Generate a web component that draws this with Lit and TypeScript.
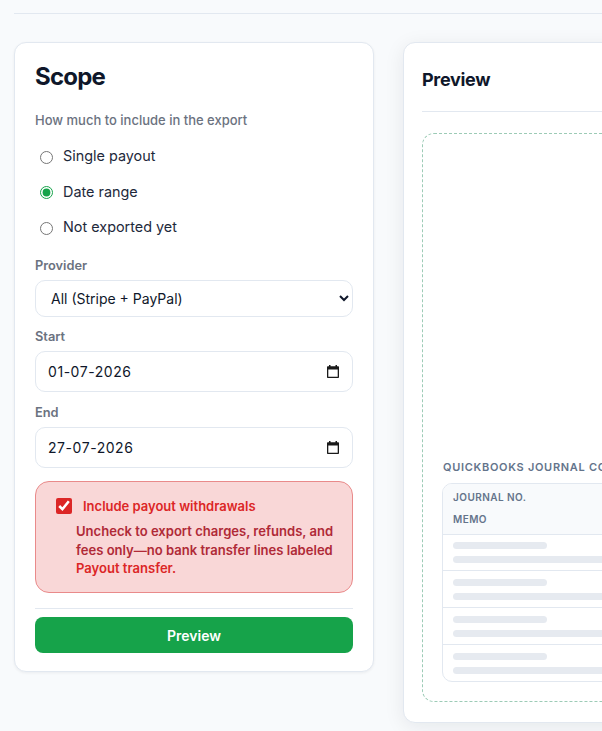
import { LitElement, html, css } from "lit";
import { customElement } from "lit/decorators.js";

const calendar = html`<svg class="cal" viewBox="0 0 12 13" width="12" height="13" aria-hidden="true">
  <path fill="#1a1a1a" d="M2 0h1.5v1.2h5V0H10v1.2h1c.6 0 1 .4 1 1V12c0 .6-.4 1-1 1H1c-.6 0-1-.4-1-1V2.2c0-.6.4-1 1-1h1V0zM1.3 4.4v7.3h9.4V4.4H1.3z" />
</svg>`;

@customElement("app-root")
export class AppRoot extends LitElement {
  static styles = css`
    :host { display: block; width: 602px; height: 731px; overflow: hidden; background: #f8fafc; font-family: Inter, "Liberation Sans", sans-serif; color: #0f172a; }
    * { box-sizing: border-box; }
    .page { width: 1300px; padding: 13px 0 0 14px; }
    .rule { height: 1px; background: #e2e8f0; margin-bottom: 28px; }
    .cols { display: grid; grid-template-columns: 360px 880px; column-gap: 29px; align-items: start; }
    .card { background: #fff; border: 1px solid #e2e8f0; border-radius: 12px; box-shadow: 0 1px 3px rgba(15,23,42,.06); }
    .scope { padding: 19px 20px 20px; height: 630px; display: flex; flex-direction: column; }
    .scope > * { flex: none; }
    h2 { margin: 0; font-size: 24px; line-height: 29px; font-weight: 700; letter-spacing: -.8px; }
    .hint { margin: 21px 0 0; font-size: 13px; line-height: 16px; color: #6b7280; font-weight: 500; }
    .radios { display: flex; flex-direction: column; margin-top: 10px; }
    .radio { display: flex; align-items: center; height: 35.5px; flex: none; font-size: 14.4px; color: #1e293b; }
    .radio input { margin: 3px 10px 0 5px; width: 13px; height: 13px; accent-color: #16a34a; }
    .lab { display: block; font-size: 12.8px; line-height: 15px; font-weight: 600; color: #6b7280; margin-top: 13px; }
    .lab.first { margin-top: 13.5px; }
    .lab.tight { margin-top: 12px; }
    .ctl { display: block; width: 318px; margin-top: 7px; border: 1px solid #e2e8f0; border-radius: 10px; background: #fff; font: 14px Inter, sans-serif; color: #0f172a; }
    select.ctl { height: 37px; padding: 0 8px 0 11px; }
    .date { display: flex; align-items: center; height: 41px; padding: 0 13px 0 12px; }
    .date input { flex: 1; min-width: 0; border: 0; padding: 0; background: none; outline: none; font: inherit; color: inherit; letter-spacing: .55px; }
    .cal { flex: none; display: block; }
    .alert { margin-top: 13px; height: 111.5px; background: #f9d7d7; border: 1px solid #e98a8a; border-radius: 14px; padding: 15px 18px 0 20px; }
    .chk { display: flex; align-items: center; font-size: 13px; line-height: 18px; font-weight: 600; color: #dc2626; }
    .chk input { margin: 0 11px 0 0; width: 16px; height: 16px; accent-color: #dc2626; }
    .desc { margin: 7px -8px 0 20px; font-size: 13.05px; line-height: 18.5px; font-weight: 600; color: #b02a37; }
    .desc b { font-weight: 600; color: #dc2626; }
    .sep { height: 1px; background: #e2e8f0; margin-top: 15.5px; }
    button { margin-top: 8px; height: 36px; width: 318px; border: 0; border-radius: 8px; background: #16a34a; color: #fff; font: 600 14px Inter, sans-serif; }
    .preview { height: 681px; padding: 18px 18px 20px 18px; box-shadow: 0 4px 20px rgba(15,23,42,.08); }
    .preview h2 { font-size: 18px; line-height: 38px; letter-spacing: -.3px; }
    .head { height: 51px; border-bottom: 1px solid #e2e8f0; }
    .drop { margin-top: 21px; height: 569px; border: 1px dashed #9ccbb6; border-radius: 12px; padding: 0 19px 19px; display: flex; flex-direction: column; justify-content: flex-end; }
    .cap { font-size: 11px; line-height: 14px; font-weight: 600; letter-spacing: .7px; color: #64748b; margin: 0 0 9px 1px; white-space: nowrap; }
    .table { border: 1px solid #e2e8f0; border-radius: 10px; overflow: hidden; }
    .thead { height: 51px; padding: 6px 10px 0; background: #f8fafc; border-bottom: 1px solid #e2e8f0; font-size: 10px; font-weight: 600; letter-spacing: .45px; color: #64748b; display: flex; flex-direction: column; gap: 7px; line-height: 15px; }
    .row { height: 37px; padding: 8px 10px 0; border-bottom: 1px solid #e2e8f0; display: flex; flex-direction: column; gap: 7px; }
    .row:nth-child(2) { height: 36px; padding-top: 7px; }
    .row:last-child { height: 36px; border-bottom: 0; }
    .sk { height: 7px; border-radius: 4px; background: #e6eaf0; flex: none; }
    .sk.s { width: 94px; }
  `;

  render() {
    return html`
      <div class="page">
        <div class="rule"></div>
        <div class="cols">
          <section class="card scope">
            <h2>Scope</h2>
            <p class="hint">How much to include in the export</p>
            <div class="radios">
              <label class="radio"><input type="radio" name="r" />Single payout</label>
              <label class="radio"><input type="radio" name="r" checked />Date range</label>
              <label class="radio"><input type="radio" name="r" />Not exported yet</label>
            </div>
            <label class="lab first">Provider</label>
            <select class="ctl"><option>All (Stripe + PayPal)</option></select>
            <label class="lab tight">Start</label>
            <div class="ctl date"><input type="text" value="01-07-2026" />${calendar}</div>
            <label class="lab">End</label>
            <div class="ctl date"><input type="text" value="27-07-2026" />${calendar}</div>
            <div class="alert">
              <label class="chk"><input type="checkbox" checked />Include payout withdrawals</label>
              <p class="desc">Uncheck to export charges, refunds, and fees only—no bank transfer lines labeled <b>Payout transfer.</b></p>
            </div>
            <div class="sep"></div>
            <button>Preview</button>
          </section>
          <section class="card preview">
            <div class="head"><h2>Preview</h2></div>
            <div class="drop">
              <div class="cap">QUICKBOOKS JOURNAL CONTENTS</div>
              <div class="table">
                <div class="thead"><span>JOURNAL NO.</span><span>MEMO</span></div>
                ${[0, 1, 2, 3].map(() => html`<div class="row"><div class="sk s"></div><div class="sk"></div></div>`)}
              </div>
            </div>
          </section>
        </div>
      </div>
    `;
  }
}
